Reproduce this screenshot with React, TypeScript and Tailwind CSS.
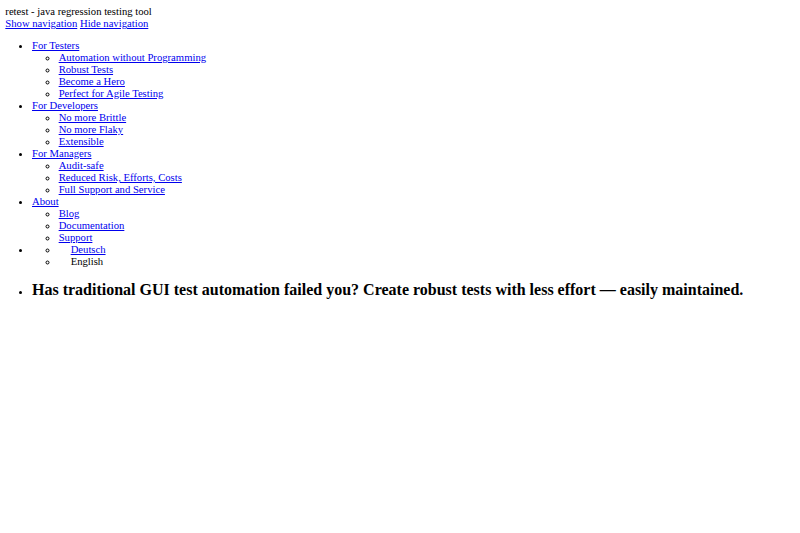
import React from "react";

const link = "text-[#0000ee] underline";

function Sub({ items }: { items: string[] }) {
  return (
    <ul className="list-[circle] pl-[26.67px]">
      {items.map((t) => (
        <li key={t}>
          <a href="#" className={link}>
            {t}
          </a>
        </li>
      ))}
    </ul>
  );
}

export default function App() {
  return (
    <div className="h-[533px] overflow-y-scroll bg-white [&::-webkit-scrollbar]:w-[10px] [&::-webkit-scrollbar-track]:bg-[#f1f1f1] [&::-webkit-scrollbar-thumb]:border-x-[1px] [&::-webkit-scrollbar-thumb]:border-solid [&::-webkit-scrollbar-thumb]:border-[#f1f1f1] [&::-webkit-scrollbar-thumb]:bg-[#c1c1c1] [&::-webkit-scrollbar-button]:block [&::-webkit-scrollbar-button]:h-[10px] [&::-webkit-scrollbar-button]:bg-[#f1f1f1]">
      <div
        className="min-h-[1260px] p-[5.33px] text-[10.67px] leading-[12px] text-black"
        style={{ fontFamily: '"Liberation Serif", "Times New Roman", serif' }}
      >
        <div>retest - java regression testing tool</div>
        <div>
          <a href="#" className={link}>
            Show navigation
          </a>{" "}
          <a href="#" className={link}>
            Hide navigation
          </a>
        </div>
        <ul className="mt-[9.67px] mb-[10.67px] list-disc pl-[26.67px]">
          <li>
            <a href="#" className={link}>
              For Testers
            </a>
            <Sub
              items={[
                "Automation without Programming",
                "Robust Tests",
                "Become a Hero",
                "Perfect for Agile Testing",
              ]}
            />
          </li>
          <li>
            <a href="#" className={link}>
              For Developers
            </a>
            <Sub items={["No more Brittle", "No more Flaky", "Extensible"]} />
          </li>
          <li>
            <a href="#" className={link}>
              For Managers
            </a>
            <Sub
              items={[
                "Audit-safe",
                "Reduced Risk, Efforts, Costs",
                "Full Support and Service",
              ]}
            />
          </li>
          <li>
            <a href="#" className={link}>
              About
            </a>
            <Sub items={["Blog", "Documentation", "Support"]} />
          </li>
          <li>
            <ul className="list-[circle] pl-[26.67px]">
              <li>
                <span className="inline-block w-[12px]" />
                <a href="#" className={link}>
                  Deutsch
                </a>
              </li>
              <li>
                <span className="inline-block w-[12px]" />
                English
              </li>
            </ul>
          </li>
        </ul>
        <ul className="mt-[14.28px] list-disc pl-[26.67px]">
          <li>
            <h2 className="text-[16px] font-bold leading-[18.4px]">
              Has traditional GUI test automation failed you? Create robust tests with less effort — easily maintained.
            </h2>
          </li>
        </ul>
      </div>
    </div>
  );
}
